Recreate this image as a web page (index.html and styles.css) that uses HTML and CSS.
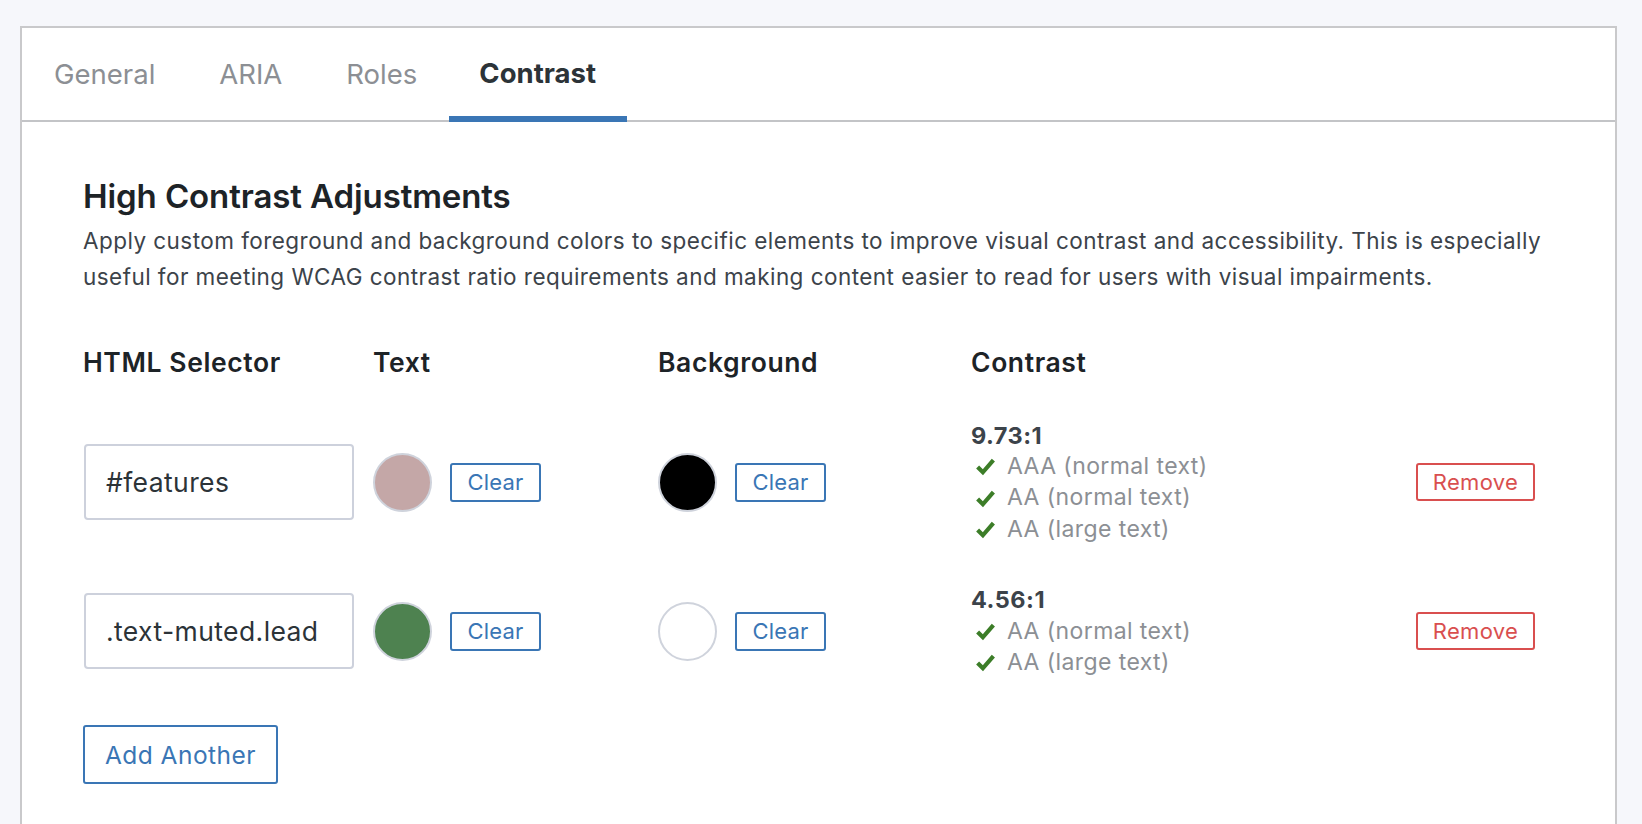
FILE: index.html
```html
<!DOCTYPE html>
<html lang="en">
<head>
<meta charset="utf-8">
<title>Contrast</title>
<link rel="stylesheet" href="styles.css">
</head>
<body>
<div class="page">
  <div class="panel">
    <nav class="tabs">
      <a class="tab">General</a>
      <a class="tab">ARIA</a>
      <a class="tab">Roles</a>
      <a class="tab active">Contrast</a>
    </nav>
    <div class="content">
      <h2 class="title">High Contrast Adjustments</h2>
      <p class="desc">Apply custom foreground and background colors to specific elements to improve visual contrast and accessibility. This is especially useful for meeting WCAG contrast ratio requirements and making content easier to read for users with visual impairments.</p>

      <div class="grid">
        <div class="head">HTML Selector</div>
        <div class="head">Text</div>
        <div class="head">Background</div>
        <div class="head">Contrast</div>
        <div class="head"></div>

        <div class="cell"><div class="input">#features</div></div>
        <div class="cell picker"><span class="swatch rose"></span><button class="btn clear">Clear</button></div>
        <div class="cell picker"><span class="swatch black"></span><button class="btn clear">Clear</button></div>
        <div class="cell">
          <div class="result">
            <div class="ratio">9.73:1</div>
            <div class="pass"><svg class="check" viewBox="0 0 20 20"><path d="M2.5 10.5 L7.5 15.5 L17.5 4"/></svg>AAA (normal text)</div>
            <div class="pass"><svg class="check" viewBox="0 0 20 20"><path d="M2.5 10.5 L7.5 15.5 L17.5 4"/></svg>AA (normal text)</div>
            <div class="pass"><svg class="check" viewBox="0 0 20 20"><path d="M2.5 10.5 L7.5 15.5 L17.5 4"/></svg>AA (large text)</div>
          </div>
        </div>
        <div class="cell"><button class="btn danger">Remove</button></div>

        <div class="cell"><div class="input">.text-muted.lead</div></div>
        <div class="cell picker"><span class="swatch green"></span><button class="btn clear">Clear</button></div>
        <div class="cell picker"><span class="swatch white"></span><button class="btn clear">Clear</button></div>
        <div class="cell">
          <div class="result">
            <div class="ratio">4.56:1</div>
            <div class="pass"><svg class="check" viewBox="0 0 20 20"><path d="M2.5 10.5 L7.5 15.5 L17.5 4"/></svg>AA (normal text)</div>
            <div class="pass"><svg class="check" viewBox="0 0 20 20"><path d="M2.5 10.5 L7.5 15.5 L17.5 4"/></svg>AA (large text)</div>
          </div>
        </div>
        <div class="cell"><button class="btn danger">Remove</button></div>
      </div>

      <button class="btn add">Add Another</button>
    </div>
  </div>
</div>
</body>
</html>
```

FILE: styles.css
```css
* { box-sizing: border-box; }

html, body {
  margin: 0;
  padding: 0;
  background: #f6f7fb;
  font-family: Inter, "Noto Sans", "Liberation Sans", sans-serif;
  color: #1d2327;
}

.page {
  padding: 26px 25px 0 20px;
  height: 824px;
  overflow: hidden;
}

.panel {
  background: #fff;
  border: 2px solid #c9c9cb;
  border-bottom: none;
  height: 820px;
}

.tabs {
  display: flex;
  height: 94px;
  border-bottom: 2px solid #c3c4c7;
}

.tab {
  display: flex;
  align-items: center;
  padding: 2px 32px 0;
  font-size: 27.5px;
  color: #8c8f94;
  margin-bottom: -2px;
  border-bottom: 4px solid transparent;
}

.tab.active {
  color: #2c3338;
  font-weight: 700;
  border-bottom: 6px solid #3a76b5;
  padding-bottom: 0;
  padding-left: 30px;
  padding-right: 31px;
}

.content {
  padding: 54px 40px 0 61px;
}

.title {
  margin: 0;
  font-size: 33px;
  font-weight: 600;
  line-height: 40px;
  color: #1d2327;
  letter-spacing: -0.1px;
}

.desc {
  margin: 7px 0 0;
  font-size: 22.5px;
  line-height: 35.5px;
  letter-spacing: 0.45px;
  color: #3c434a;
  max-width: 1480px;
}

.grid {
  display: grid;
  grid-template-columns: 290px 285px 313px 445px auto;
  margin-top: 32px;
  align-items: center;
}

.head {
  font-size: 26.5px;
  font-weight: 600;
  line-height: 32px;
  letter-spacing: 0.6px;
  padding: 20px 0 22px;
  color: #1d2327;
}

.cell {
  padding: 19.5px 0;
  display: flex;
  align-items: center;
}

.input {
  width: 270px;
  height: 76px;
  border: 2px solid #cdd1dc;
  border-radius: 4px;
  padding: 0 20px;
  display: flex;
  align-items: center;
  font-size: 26.5px;
  letter-spacing: 0.4px;
  color: #2c3338;
  margin-left: 1px;
}

.picker { gap: 18px; }

.swatch {
  width: 59px;
  height: 59px;
  border-radius: 50%;
  border: 2px solid #cfd3dc;
  display: inline-block;
  flex: none;
}
.swatch.rose { background: #c4a7a7; }
.swatch.black { background: #000; }
.swatch.green { background: #4e8250; }
.swatch.white { background: #fff; }

.btn {
  font-family: inherit;
  background: #fff;
  border: 2px solid #3a76b5;
  border-radius: 3px;
  color: #3a76b5;
  font-size: 22px;
  letter-spacing: 0.2px;
  height: 39px;
  padding: 0 15px;
  line-height: 1;
  cursor: pointer;
}

.btn.clear {
  width: 91px;
  padding: 0;
}

.btn.danger {
  border-color: #d94f4f;
  color: #d94f4f;
  width: 119px;
  height: 38px;
  padding: 0;
  letter-spacing: 0.3px;
}

.result {
  display: flex;
  flex-direction: column;
}

.ratio {
  font-size: 23.5px;
  font-weight: 700;
  line-height: 31.4px;
  letter-spacing: 0.5px;
  color: #3c434a;
}

.pass {
  display: flex;
  align-items: center;
  font-size: 23px;
  line-height: 31.4px;
  letter-spacing: 0.4px;
  color: #8c8f94;
}

.check {
  width: 21px;
  height: 21px;
  margin: 0 11px 0 4px;
  fill: none;
  stroke: #3c7d28;
  stroke-width: 4;
  stroke-linecap: butt;
  stroke-linejoin: miter;
}

.add {
  margin-top: 27.5px;
  height: 59px;
  padding: 0 20px;
  font-size: 24.5px;
  letter-spacing: 0.45px;
}
```
